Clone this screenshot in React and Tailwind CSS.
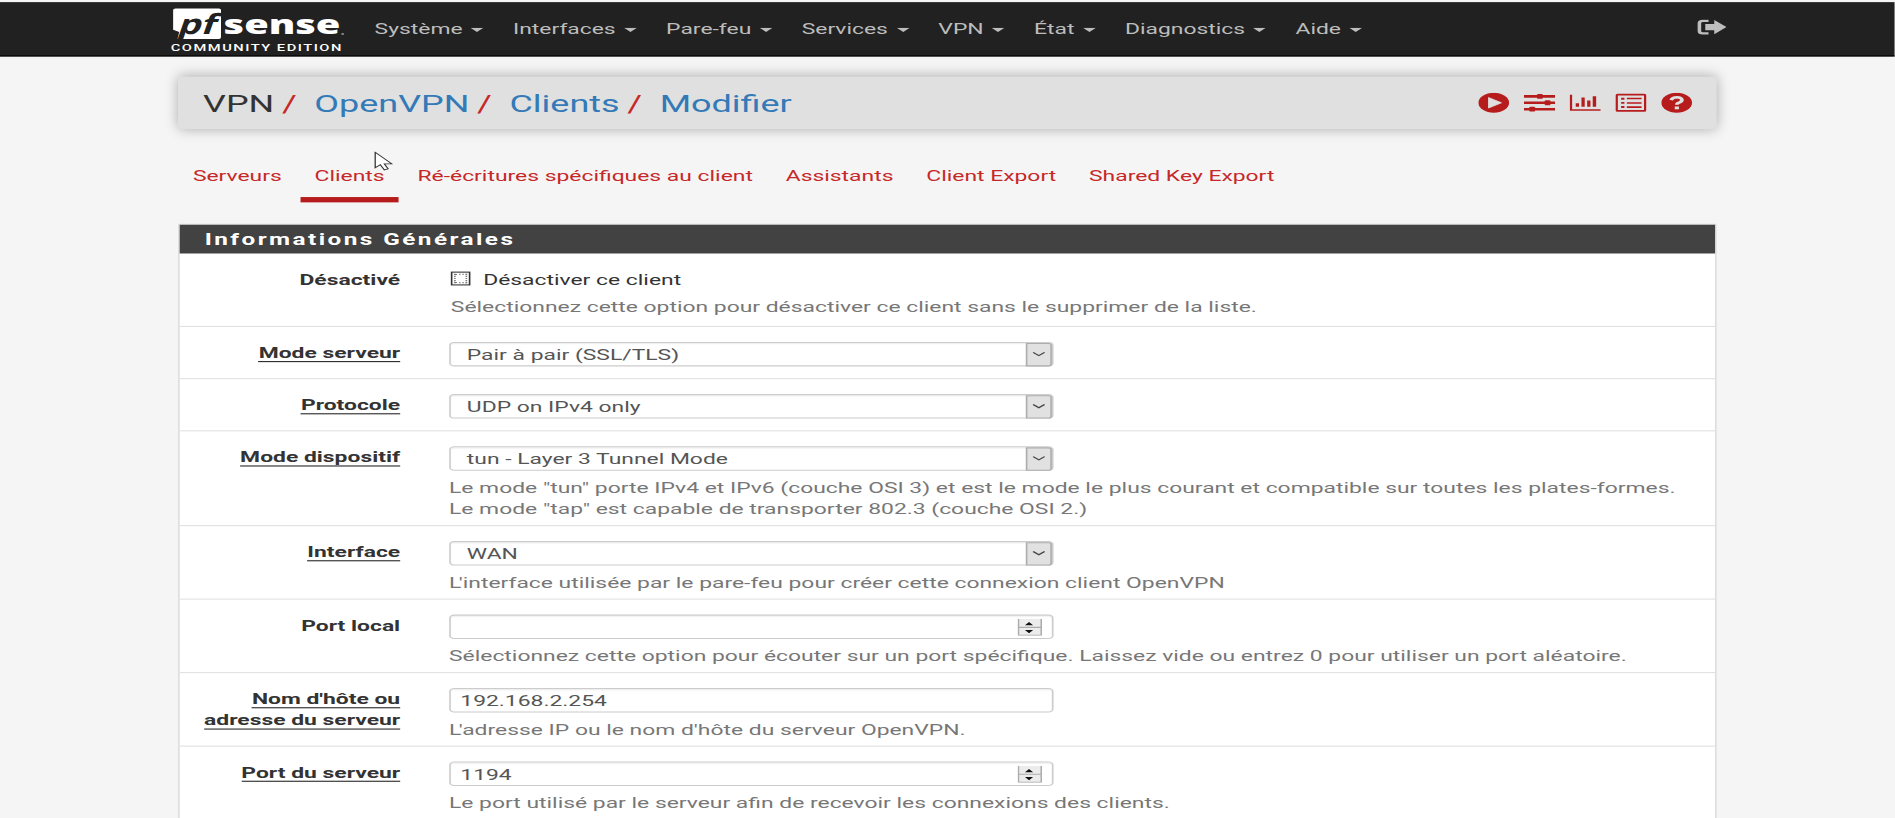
import React from "react";

const MENU = ["Système", "Interfaces", "Pare-feu", "Services", "VPN", "État", "Diagnostics", "Aide"];
const TABS = ["Serveurs", "Clients", "Ré-écritures spécifiques au client", "Assistants", "Client Export", "Shared Key Export"];

function Icon({ children }) {
  return (
    <svg className="h-[19px] w-[19px] fill-[#b71c1c]" viewBox="0 0 19 19">
      {children}
    </svg>
  );
}

function Logo() {
  return (
    <div className="mt-[6px] w-[108px] shrink-0 text-white">
      <svg className="ml-[0.700px] block h-[29px] w-[106px] overflow-visible" viewBox="0 0 106 29">
        <path d="M1.500 0H28Q29.300 0 29.300 1.500V27Q29.300 28.500 28 28.500H2.700L3.700 22L0 20V1.500Q0 0 1.500 0Z" fill="#fff" />
        <text transform="translate(2 23.700) skewX(-13)" x="0" y="0" fontSize="26" fontWeight="700" fill="#212121" textLength="23" lengthAdjust="spacingAndGlyphs" className="font-['Open_Sans',sans-serif]">pf</text>
        <text x="30.900" y="23.700" fontSize="25.500" fontWeight="800" fill="#fff" textLength="71.500" lengthAdjust="spacingAndGlyphs" className="font-['Open_Sans',sans-serif]">sense</text>
        <circle cx="103.800" cy="24" r="0.900" fill="#888" />
      </svg>
      <div className="mt-px -ml-[0.500px] text-[9px] leading-[14px] font-medium tracking-[0.920px] whitespace-nowrap">COMMUNITY EDITION</div>
    </div>
  );
}

function Slash() {
  return <span className="mr-[10.800px] ml-[4.700px] text-[#c62828]">/</span>;
}

function Select({ value }) {
  return (
    <div className="flex h-[23px] w-[370px] items-center justify-between rounded-[3px] border border-[#ccc] bg-white pl-[10.300px] shadow-[inset_0_1px_1px_rgba(0,0,0,0.075)]">
      <span className="text-[#555]">{value}</span>
      <span className="flex h-[22px] w-[16px] items-center justify-center rounded-r-[2px] border border-[#adadad] bg-[#e1e1e1]">
        <svg className="h-[5px] w-[8px]" viewBox="0 0 8 5" fill="none" stroke="#444" strokeWidth="1">
          <path d="M0.500 0.800L4 3.800L7.500 0.800" />
        </svg>
      </span>
    </div>
  );
}

function Input({ value, spinner }) {
  return (
    <div className="flex h-[23px] w-[370px] items-center justify-between rounded-[3px] border border-[#ccc] bg-white pr-[6px] pl-[6.300px] shadow-[inset_0_1px_1px_rgba(0,0,0,0.075)]">
      <span className="text-[#555]">{value}</span>
      {spinner && (
        <svg className="h-[16px] w-[15px]" viewBox="0 0 15 16">
          <rect x="0.500" y="0" width="14" height="15.500" fill="#ececec" />
          <path d="M0.500 0V15.500H14.500V0M0.500 8H14.500" fill="none" stroke="#acacac" />
          <path d="M4.500 6L7 3L9.500 6ZM4.500 10.500L7 13.500L9.500 10.500Z" fill="#111" />
        </svg>
      )}
    </div>
  );
}

// Tightens the elided article so the apostrophe tucks under the L
function HintLine({ text }) {
  if (!text.startsWith("L'")) return <div>{text}</div>;
  return (
    <div>
      <span className="tracking-[-1.600px]">L</span>
      {text.slice(1)}
    </div>
  );
}

function Row({ label, required, children, hint, last }) {
  return (
    <div className={"flex pt-[14px] pb-[5px] " + (last ? "" : "border-b border-[#e0e0e0]")}>
      <div className="w-[135px] shrink-0 text-right font-bold text-[#333]">
        {label.map((line) => (
          <div key={line} className="h-[20px] whitespace-nowrap">
            <span className={required ? "inline-block h-[19px] border-b border-[#222]" : ""}>{line}</span>
          </div>
        ))}
      </div>
      <div className="ml-[29.500px]">
        {children}
        <div className="mt-[6px] ml-[0.400px] whitespace-nowrap text-[#777]">
          {(hint || []).map((line) => (
            <HintLine key={line} text={line} />
          ))}
        </div>
      </div>
    </div>
  );
}

export default function App() {
  return (
    <div className="h-[818px] w-[1895px] overflow-hidden bg-[#f5f5f5]">
      <div className="h-[768px] w-[1160px] origin-top-left transform-[scale(1.6334,1.0651)] overflow-hidden bg-[#f5f5f5] pt-[2.300px] font-[Roboto,sans-serif] text-[14px] leading-[20px]">
        <nav className="flex h-[51px] justify-center border-b border-black bg-[#212121]">
          <div className="flex w-[950px]">
            <Logo />
            <ul className="ml-[7.400px] flex pt-[14.300px] text-[#bdbdbd]">
              {MENU.map((item) => (
                <li key={item} className="flex h-[20px] items-center px-[8.950px] leading-[20px]">
                  {item}
                  <svg className="mt-[2px] ml-[5px] h-[4px] w-[8px] fill-[#bdbdbd]" viewBox="0 0 8 4">
                    <path d="M0 0H8L4 4Z" />
                  </svg>
                </li>
              ))}
            </ul>
            <svg className="mt-[16px] mr-[-2px] ml-auto h-[15px] w-[18px] fill-[#bdbdbd]" viewBox="0 0 18 15">
              <path d="M7 0.500V2.700H3.600Q2.500 2.700 2.500 3.800V11Q2.500 12.200 3.600 12.200H7V14.300H3.500Q0.300 14.300 0.300 11V3.800Q0.300 0.500 3.500 0.500Z" />
              <path d="M10.500 0.700L18 7.400L10.500 14.200V10.300H5V4.600H10.500Z" />
            </svg>
          </div>
        </nav>

        <main className="mx-auto w-[942px]">
          <header className="mt-[18.500px] flex h-[49px] items-center rounded-[3px] bg-[#e0e0e0] pr-[14.900px] pl-[15.300px] text-[22px] shadow-[0_0_10px_rgba(0,0,0,0.3)]">
            <div className="pt-[3px]">
              <span className="text-[#333]">VPN</span>
              <Slash />
              <span className="text-[#337ab7]">OpenVPN</span>
              <Slash />
              <span className="text-[#337ab7]">Clients</span>
              <Slash />
              <span className="text-[#337ab7]">Modifier</span>
            </div>
            <div className="ml-auto flex gap-[9px] pt-px">
              <Icon>
                <circle cx="9.500" cy="9.500" r="9.400" />
                <path d="M6.300 4.600L14.200 9.500L6.300 14.400Z" fill="#e0e0e0" stroke="#e0e0e0" strokeWidth="0.600" strokeLinejoin="round" />
              </Icon>
              <Icon>
                <path d="M0 2.300H19V4.700H0ZM0 8.300H19V10.700H0ZM0 14.300H19V16.700H0Z" />
                <rect x="8" y="1.200" width="3.500" height="4.600" rx="0.800" />
                <rect x="12.700" y="7.200" width="3.500" height="4.600" rx="0.800" />
                <rect x="3.300" y="13.200" width="3.500" height="4.600" rx="0.800" />
              </Icon>
              <Icon>
                <path d="M0 2H1.500V15.500H19V17H0ZM3.700 10H5.700V13.300H3.700ZM7.200 4.500H9.200V13.300H7.200ZM10.700 7.300H12.700V13.300H10.700ZM14.100 3.300H16.200V13.300H14.100Z" />
              </Icon>
              <Icon>
                <path fillRule="evenodd" d="M1.500 1H17.500Q19 1 19 2.500V16.500Q19 18 17.500 18H1.500Q0 18 0 16.500V2.500Q0 1 1.500 1ZM1.500 2.700V16.300H17.500V2.700Z" />
                <path d="M3.500 4.800H5.500V6.600H3.500ZM7 4.800H16V6.300H7ZM3.500 8.700H5.500V10.500H3.500ZM7 8.900H16V10.400H7ZM3.500 12.600H5.500V14.400H3.500ZM7 12.800H16V14.300H7Z" />
              </Icon>
              <Icon>
                <circle cx="9.500" cy="9.500" r="9.400" />
                <path d="M6.100 7Q6.800 4.300 9.600 4.300Q12.700 4.500 12.700 7Q12.600 8.500 11 9.300Q9.600 9.900 9.600 11.300" fill="none" stroke="#e0e0e0" strokeWidth="2.300" />
                <rect x="8.300" y="13" width="2.600" height="2.600" fill="#e0e0e0" />
              </Icon>
            </div>
          </header>

          <ul className="mt-[34.500px] mb-[20px] flex gap-[2.500px] pl-[0.300px] text-[#c62828]">
            {TABS.map((tab) => (
              <li
                key={tab}
                className={
                  "relative h-[34.500px] border-b-[5px] px-[8.800px] whitespace-nowrap " +
                  (tab === "Clients" ? "border-[#b71c1c]" : "border-transparent")
                }
              >
                {tab}
                {tab === "Clients" && (
                  <svg className="absolute top-[-13px] left-[45.500px] h-[19px] w-[12px]" viewBox="0 0 12 19">
                    <path d="M0.700 1V15.500L3.800 12.600L6.300 17.600L8.600 16.500L6.300 11.800H10.800Z" fill="#fff" stroke="#333" strokeWidth="0.800" />
                  </svg>
                )}
              </li>
            ))}
          </ul>

          <section className="h-[600px] border border-[#ddd] bg-white">
            <h2 className="h-[27.600px] bg-[#424242] pl-[15.300px] text-[14.900px] leading-[28px] font-bold tracking-[1.500px] text-white">Informations Générales</h2>
            <div className="flex h-[68.700px] border-b border-[#e0e0e0] pt-[14.600px]">
              <div className="w-[135px] shrink-0 text-right font-bold text-[#333]">Désactivé</div>
              <div className="ml-[31px]">
                <div className="flex items-center text-[#333]">
                  <span className="mt-[-2px] mr-[7.800px] block h-[13px] w-[12px] border border-[#333] bg-white p-px">
                    <span className="block h-full w-full border border-dotted border-[#777]" />
                  </span>
                  Désactiver ce client
                </div>
                <div className="mt-[5px] whitespace-nowrap text-[#777]">
                  Sélectionnez cette option pour désactiver ce client sans le supprimer de la liste.
                </div>
              </div>
            </div>
            <Row label={["Mode serveur"]} required>
              <Select value="Pair à pair (SSL/TLS)" />
            </Row>
            <Row label={["Protocole"]} required>
              <Select value="UDP on IPv4 only" />
            </Row>
            <Row
              label={["Mode dispositif"]}
              required
              hint={[
                "Le mode \"tun\" porte IPv4 et IPv6 (couche OSI 3) et est le mode le plus courant et compatible sur toutes les plates-formes.",
                "Le mode \"tap\" est capable de transporter 802.3 (couche OSI 2.)",
              ]}
            >
              <Select value="tun - Layer 3 Tunnel Mode" />
            </Row>
            <Row label={["Interface"]} required hint={["L'interface utilisée par le pare-feu pour créer cette connexion client OpenVPN"]}>
              <Select value="WAN" />
            </Row>
            <Row label={["Port local"]} hint={["Sélectionnez cette option pour écouter sur un port spécifique. Laissez vide ou entrez 0 pour utiliser un port aléatoire."]}>
              <Input value="" spinner />
            </Row>
            <Row label={["Nom d'hôte ou", "adresse du serveur"]} required hint={["L'adresse IP ou le nom d'hôte du serveur OpenVPN."]}>
              <Input value="192.168.2.254" />
            </Row>
            <Row label={["Port du serveur"]} required last hint={["Le port utilisé par le serveur afin de recevoir les connexions des clients."]}>
              <Input value="1194" spinner />
            </Row>
          </section>
        </main>
      </div>
    </div>
  );
}
